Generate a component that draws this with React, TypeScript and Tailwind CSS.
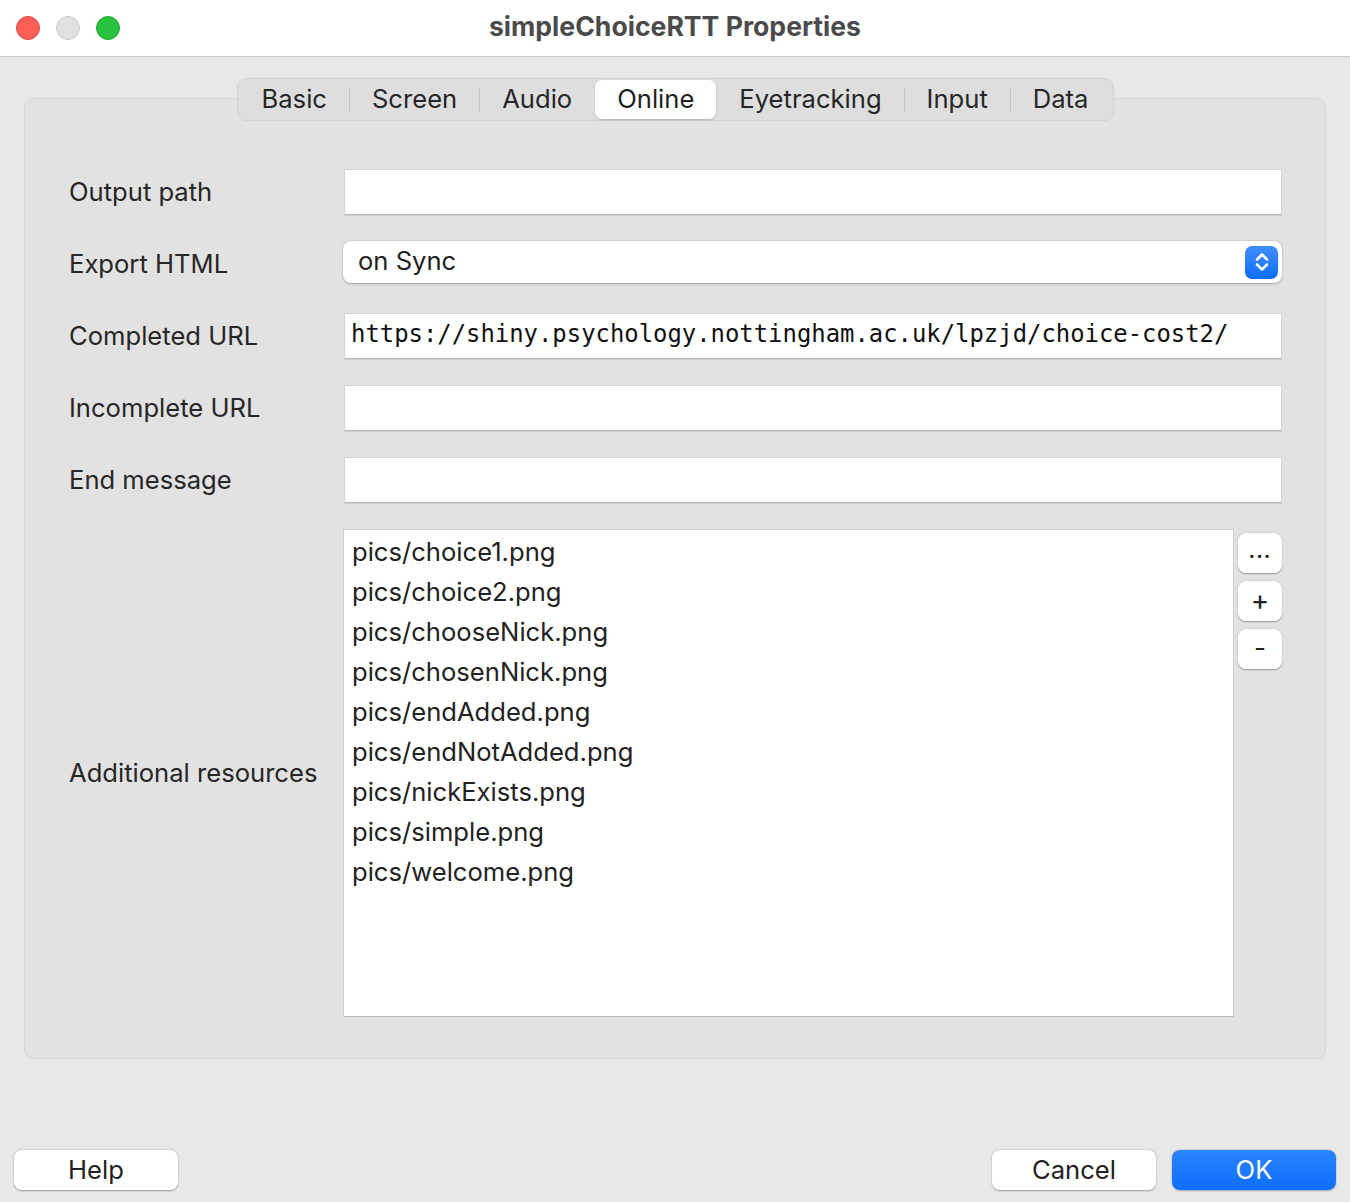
import React from "react";

const font = { fontFamily: "Inter, 'Noto Sans', sans-serif" };

function TextInput({ value }: { value?: string }) {
  return (
    <div className="h-[46px] flex-1 bg-white border border-[#d4d4d4] border-b-[#b8b8b8] shadow-[0_1px_0_rgba(0,0,0,0.08)] flex items-center px-[6px]">
      {value ? (
        <span
          className="text-[23.9px] text-[#111] whitespace-nowrap -mt-[2px]"
          style={{ fontFamily: "'DejaVu Sans Mono', monospace" }}
        >
          {value}
        </span>
      ) : null}
    </div>
  );
}

function Row({ label, children }: { label: string; children: React.ReactNode }) {
  return (
    <div className="h-[72px] flex items-center">
      <div className="w-[275px] text-[25.6px] text-[#262626]">{label}</div>
      {children}
    </div>
  );
}

const tabs = ["Basic", "Screen", "Audio", "Online", "Eyetracking", "Input", "Data"];
const files = [
  "pics/choice1.png",
  "pics/choice2.png",
  "pics/chooseNick.png",
  "pics/chosenNick.png",
  "pics/endAdded.png",
  "pics/endNotAdded.png",
  "pics/nickExists.png",
  "pics/simple.png",
  "pics/welcome.png",
];

function SmallButton({ children }: { children: React.ReactNode }) {
  return (
    <div className="w-[44px] h-[40px] bg-white rounded-[8px] shadow-[0_0.5px_1.5px_rgba(0,0,0,0.35)] flex items-center justify-center text-[24px] text-[#222]">
      {children}
    </div>
  );
}

export default function App() {
  return (
    <div className="w-[1350px] h-[1202px] bg-[#e8e8e8] flex flex-col" style={font}>
      {/* Title bar */}
      <div className="h-[57px] bg-white border-b border-[#c9c9c9] grid grid-cols-[1fr_auto_1fr] items-center">
        <div className="flex items-center gap-[16px] pl-[16px]">
          <div className="w-[24px] h-[24px] rounded-full bg-[#fe5f57] border border-[#e2463f]" />
          <div className="w-[24px] h-[24px] rounded-full bg-[#e0e0e0] border border-[#c8c8c8]" />
          <div className="w-[24px] h-[24px] rounded-full bg-[#2ac140] border border-[#1ea832]" />
        </div>
        <div className="text-[26.6px] font-bold text-[#4b4b4b] -mt-[2px]">
          simpleChoiceRTT Properties
        </div>
        <div />
      </div>

      {/* Content */}
      <div className="px-[24px] pt-[21px] flex flex-col">
        <div className="flex justify-center relative z-10">
          <div className="h-[43px] bg-[#dedede] border border-[#d2d2d2] rounded-[9px] flex items-center px-[2px]">
            {tabs.map((t, i) => {
              const sel = t === "Online";
              const nextSel = tabs[i + 1] === "Online";
              const showSep = i < tabs.length - 1 && !sel && !nextSel;
              return (
                <React.Fragment key={t}>
                  <div
                    className={
                      sel
                        ? "h-[39px] px-[22px] flex items-center bg-white rounded-[7px] shadow-[0_1px_2px_rgba(0,0,0,0.2)] text-[25.6px] text-[#1f1f1f]"
                        : "h-[39px] px-[22px] flex items-center text-[25.6px] text-[#262626]"
                    }
                  >
                    {t}
                  </div>
                  {showSep ? <div className="w-px h-[24px] bg-[#c6c6c6]" /> : i < tabs.length - 1 ? <div className="w-px h-[24px]" /> : null}
                </React.Fragment>
              );
            })}
          </div>
        </div>

        <div className="-mt-[23px] h-[961px] bg-[#e2e2e2] border border-[#d6d6d6] rounded-[9px] pl-[44px] pr-[43px] pt-[57px] flex flex-col">
          <Row label="Output path">
            <TextInput />
          </Row>
          <Row label="Export HTML">
            <div className="h-[42px] flex-1 -mt-[4px] -ml-[1px] bg-white rounded-[8px] shadow-[0_0.5px_2px_rgba(0,0,0,0.3)] flex items-center pl-[15px] pr-[4px]">
              <span className="flex-1 text-[25.6px] text-[#222] -mt-[2px]">on Sync</span>
              <div className="w-[33px] h-[33px] rounded-[7px] bg-gradient-to-b from-[#3d8eff] to-[#0a6dfa] flex items-center justify-center">
                <svg width="18" height="24" viewBox="0 0 18 24" fill="none">
                  <path d="M4 9.5 L9 4.5 L14 9.5" stroke="white" strokeWidth="2.6" strokeLinecap="round" strokeLinejoin="round" />
                  <path d="M4 14.5 L9 19.5 L14 14.5" stroke="white" strokeWidth="2.6" strokeLinecap="round" strokeLinejoin="round" />
                </svg>
              </div>
            </div>
          </Row>
          <Row label="Completed URL">
            <TextInput value="https://shiny.psychology.nottingham.ac.uk/lpzjd/choice-cost2/" />
          </Row>
          <Row label="Incomplete URL">
            <TextInput />
          </Row>
          <Row label="End message">
            <TextInput />
          </Row>

          <div className="mt-[13px] flex items-center">
            <div className="w-[275px] text-[25.6px] text-[#262626]">Additional resources</div>
            <div className="flex flex-1 gap-[4px]">
              <div className="w-[891px] h-[488px] bg-white border border-[#cfcfcf] border-b-[#bdbdbd] pt-[2px] pl-[8px]">
                {files.map((f) => (
                  <div key={f} className="h-[40px] flex items-center text-[25.6px] text-[#222]">
                    {f}
                  </div>
                ))}
              </div>
              <div className="flex flex-col gap-[8px] pt-[4px]">
                <SmallButton>
                  <span className="text-[20px] leading-none -mt-[4px] tracking-[1px] font-bold">...</span>
                </SmallButton>
                <SmallButton>
                  <span className="text-[28px] leading-none -mt-[2px]">+</span>
                </SmallButton>
                <SmallButton>
                  <span className="text-[26px] leading-none -mt-[2px]">-</span>
                </SmallButton>
              </div>
            </div>
          </div>
        </div>
      </div>

      {/* Bottom buttons */}
      <div className="mt-auto mb-[12px] px-[14px] flex items-center">
        <div className="w-[164px] h-[40px] bg-white rounded-[8px] shadow-[0_0.5px_2px_rgba(0,0,0,0.35)] flex items-center justify-center text-[25.6px] text-[#222]">
          Help
        </div>
        <div className="flex-1" />
        <div className="w-[164px] h-[40px] bg-white rounded-[8px] shadow-[0_0.5px_2px_rgba(0,0,0,0.35)] flex items-center justify-center text-[25.6px] text-[#222]">
          Cancel
        </div>
        <div className="w-[164px] h-[40px] ml-[16px] rounded-[8px] bg-gradient-to-b from-[#2a84ff] to-[#0c6efb] shadow-[0_0.5px_2px_rgba(0,0,0,0.3)] flex items-center justify-center text-[25.6px] text-white">
          OK
        </div>
      </div>
    </div>
  );
}
